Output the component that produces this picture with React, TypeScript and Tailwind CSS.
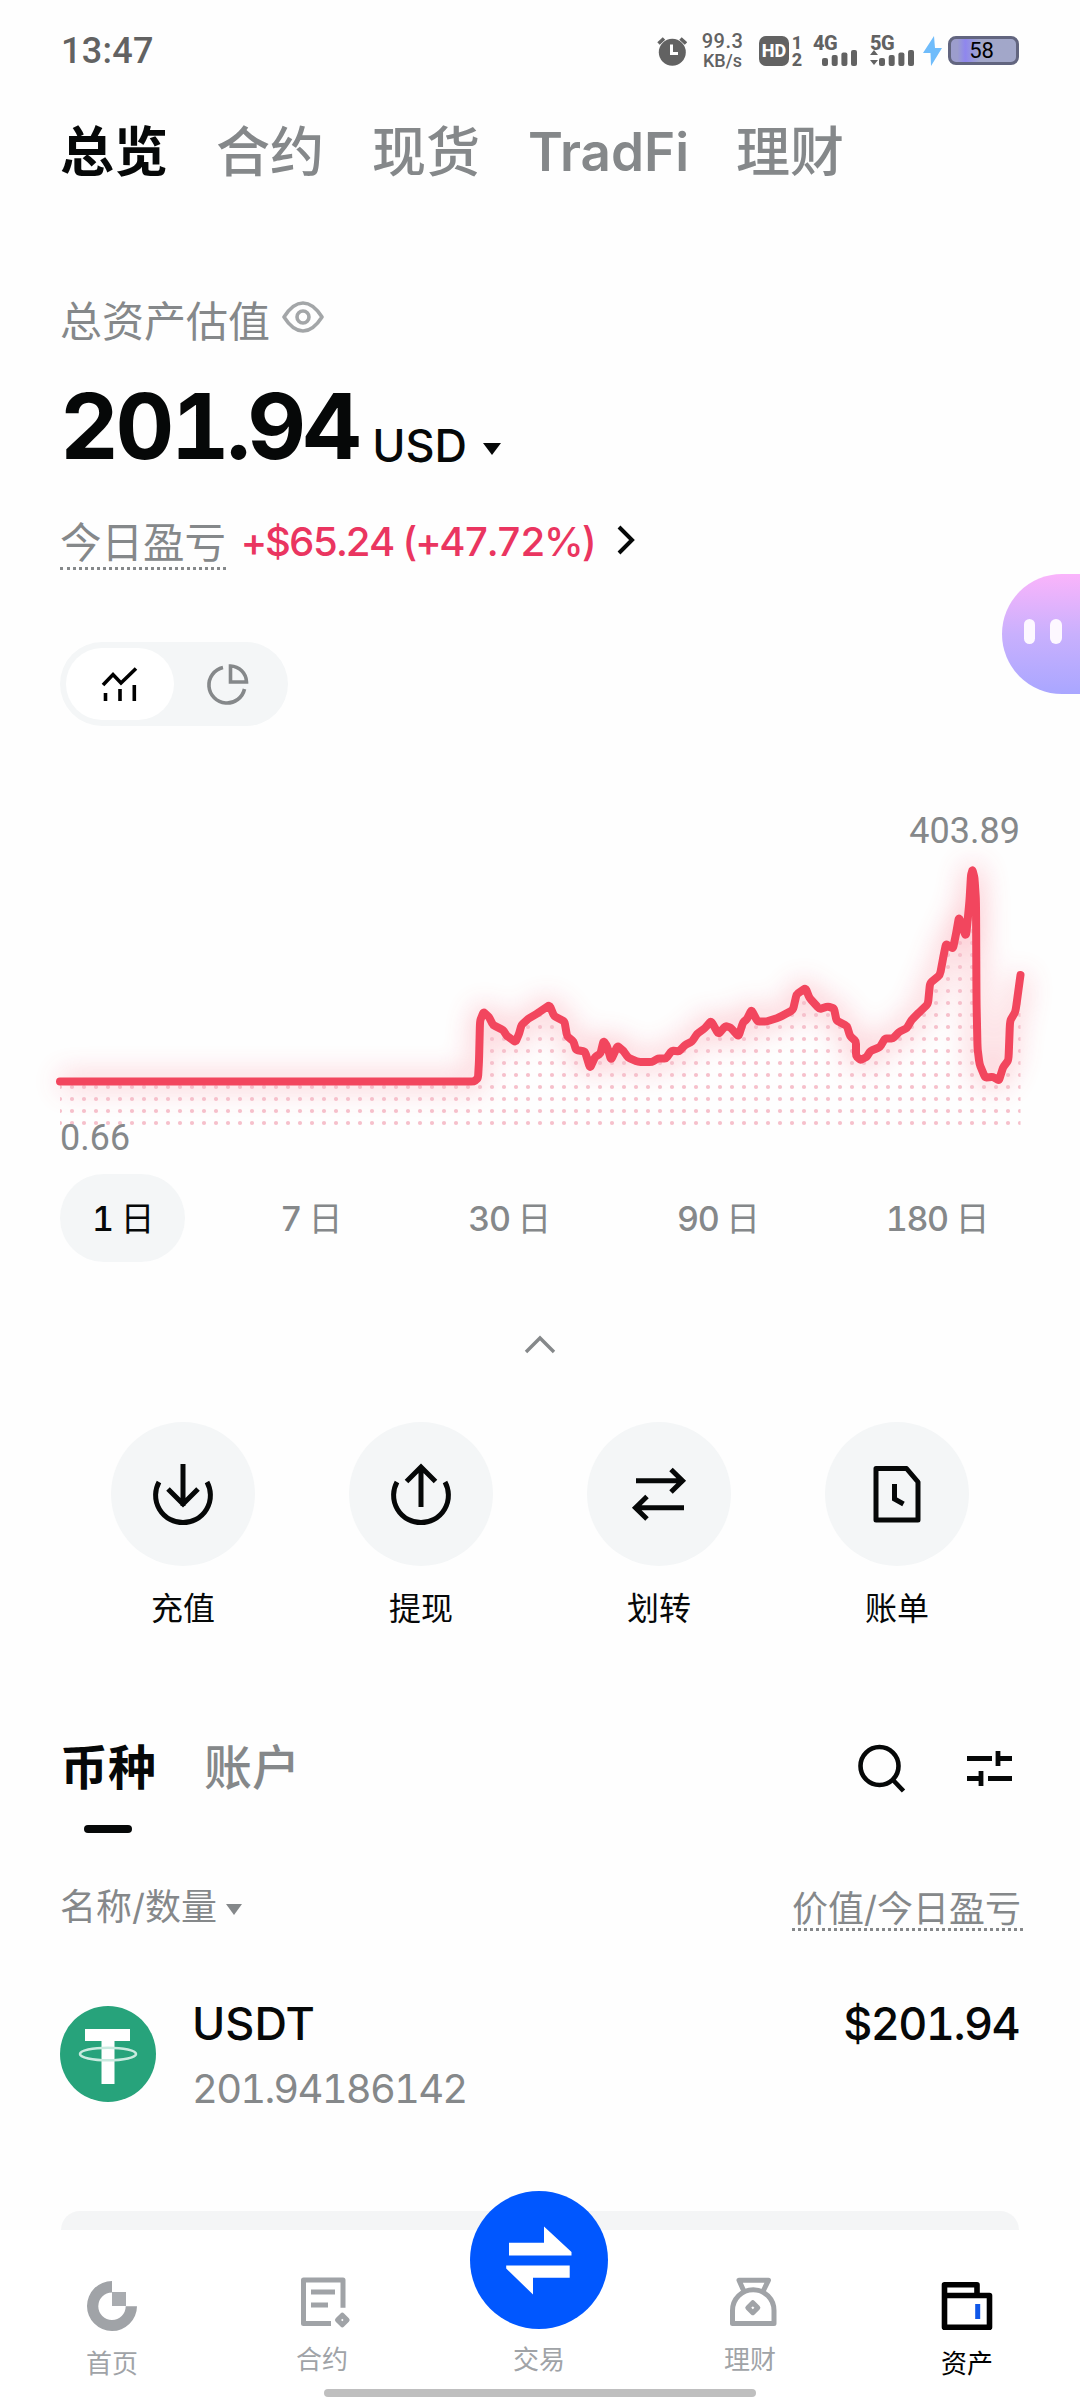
import type { ReactNode } from "react";

const topTabs = ["总览", "合约", "现货", "TradFi", "理财"];
const ranges = ["1", "7", "30", "90", "180"];

const linePoints: [number, number][] = [
  [60, 1080.5], [474, 1080.5], [478, 1077], [479, 1060], [480, 1020], [483.5, 1011], [489, 1016], [493, 1024],
  [503, 1029], [507, 1035], [515.5, 1041], [519, 1033], [521.5, 1024], [528, 1018], [538, 1012],
  [549.5, 1004], [554, 1015], [564.5, 1020.5], [567, 1035], [573.5, 1040.5], [576, 1049], [585, 1050.5],
  [590, 1067], [595, 1056], [600.5, 1052.5], [603.5, 1040], [607, 1045], [611, 1059], [617.5, 1045],
  [623.5, 1050], [628, 1056.5], [638, 1061], [652, 1061], [658, 1057.5], [666, 1057.5], [672, 1049.5],
  [679, 1050.5], [685, 1044], [692, 1040.5], [697, 1033], [705, 1027], [711, 1020], [718.5, 1033],
  [725.5, 1025], [730.5, 1026.5], [738.5, 1035.5], [743, 1021.5], [747, 1018], [751.5, 1009],
  [757.5, 1020.5], [766.5, 1020.5], [779, 1016.5], [793, 1009], [796.5, 993.5], [805.5, 987], [809.5, 997],
  [819.5, 1008], [828, 1005.5], [834, 1007.5], [836.5, 1019.5], [847, 1025], [850, 1035], [856, 1040.5],
  [856, 1055], [860.5, 1059], [866.5, 1056], [870.5, 1050], [880, 1046], [885, 1037.5], [893, 1037.5],
  [899, 1031], [907, 1027], [911.5, 1019], [919.5, 1011], [928, 1003], [930, 982], [940, 974],
  [943.5, 955], [946, 943], [953, 947.5], [956, 933], [959, 916], [966, 936], [969.5, 900], [971, 874], [972.5, 869],
  [974.5, 877], [976, 900], [976.5, 1000], [977.5, 1047], [979.5, 1063], [985, 1076.5], [993, 1076], [999, 1079.5],
  [1003, 1066.5], [1008.5, 1059], [1010, 1020], [1015.5, 1010.5], [1020.5, 974],
];

// straight segments with slightly rounded corners
function toPath(pts: [number, number][]) {
  let d = `M${pts[0][0]} ${pts[0][1]}`;
  for (let i = 1; i < pts.length; i++) {
    const [px, py] = pts[i - 1];
    const [x, y] = pts[i];
    const ax = px + (x - px) * 0.18;
    const ay = py + (y - py) * 0.18;
    const bx = px + (x - px) * 0.82;
    const by = py + (y - py) * 0.82;
    d += i === 1 ? ` L${x - 3} ${y}` : ` Q${px} ${py} ${ax} ${ay} L${bx} ${by}`;
  }
  const last = pts[pts.length - 1];
  return d + ` L${last[0]} ${last[1]}`;
}

const linePath = toPath(linePoints);

function SignalBars({ arrows }: { arrows?: boolean }) {
  return (
    <svg className="-mt-[1px] h-[17px] w-[45px]" viewBox="0 0 45 17" fill="#626262">
      {arrows && <path d="M0 6l4-5 4 5zM0 11h8l-4 5z" />}
      <rect x="9" y="9" width="6" height="8" rx="2" />
      <rect x="18.7" y="6" width="6" height="11" rx="2" />
      <rect x="28.4" y="3.5" width="6" height="13.5" rx="2" />
      <rect x="38" y="1" width="6" height="16" rx="2" />
    </svg>
  );
}

function StatusBar() {
  return (
    <div className="flex h-[102px] items-center justify-between pl-[61px] pr-[61px] text-[#626262]">
      <span className="font-[Roboto] text-[36px] leading-none font-medium tracking-[0.3px]">13:47</span>
      <div className="flex h-[34px] items-center font-[Roboto] font-semibold">
        <svg className="mr-[15px] h-[34px] w-[30px]" viewBox="657 34 30 34">
          <circle cx="672.3" cy="52.3" r="13.5" fill="#626262" />
          <path d="M658.5 43.5l5.5-5M686 43.5l-5.5-5" stroke="#626262" strokeWidth="3.6" />
          <path d="M671.5 44.5v9h6.5" fill="none" stroke="#fff" strokeWidth="3" />
        </svg>
        <div className="flex w-[41px] flex-col items-center leading-[20px] font-medium">
          <span className="text-[20px] tracking-[0.5px]">99.3</span>
          <span className="text-[18px]">KB/s</span>
        </div>
        <div className="ml-[16px] flex h-[30px] w-[30px] items-center justify-center rounded-[7px] bg-[#626262] text-[18px] font-extrabold text-white">
          HD
        </div>
        <div className="ml-[2px] flex w-[12px] flex-col items-center text-[18px] leading-[17px] font-extrabold">
          <span>1</span>
          <span>2</span>
        </div>
        <div className="ml-[10px] flex h-[30px] w-[45px] flex-col justify-between">
          <span className="text-[20px] leading-[14px] font-extrabold tracking-[-0.5px]">4G</span>
          <SignalBars />
        </div>
        <div className="ml-[12px] flex h-[30px] w-[45px] flex-col justify-between">
          <span className="text-[20px] leading-[14px] font-extrabold tracking-[-0.5px]">5G</span>
          <SignalBars arrows />
        </div>
        <svg className="ml-[8px] h-[30px] w-[19px]" viewBox="0 0 19 30">
          <path d="M11 0L0 17h7.500L8 30 19 12h-7z" fill="#6fbcfb" />
        </svg>
        <div className="ml-[6px] flex h-[29px] w-[71px] items-center justify-center rounded-[8px] border-[3px] border-[#62657f] bg-linear-to-r from-[#9c9dcd] from-10% via-[#8f86ee] via-22% to-[#a2a7c9] to-45% text-[22px] font-normal text-black">
          <span className="-ml-[4px]">58</span>
        </div>
      </div>
    </div>
  );
}

function ChartToggle() {
  return (
    <div className="mt-[72px] flex h-[84px] w-[228px] items-center rounded-full bg-[#f4f6f7] p-[6px]">
      <div className="flex h-[72px] w-[108px] items-center justify-center rounded-full bg-white">
        <svg className="h-[40px] w-[40px]" viewBox="100 663 40 40" fill="none" stroke="#000" strokeWidth="3.6">
          <path d="M103 684l10-10.500 8 8.500 15-14.500M105.500 692v8M120 688v12M134.300 684v16" />
        </svg>
      </div>
      <div className="flex h-[72px] w-[108px] items-center justify-center">
        <svg className="h-[44px] w-[44px]" viewBox="206 662 44 44" fill="none" stroke="#85888a" strokeWidth="3.6">
          <path d="M223 667.500a18 18 0 1 0 21.500 21.500" />
          <path d="M230.500 666v16h16a16.500 16.500 0 0 0-16-16z" />
        </svg>
      </div>
    </div>
  );
}

function AssetChart() {
  return (
    <div className="relative">
      <div className="mt-[85px] h-[40px] text-right font-[Roboto] text-[36px] leading-[40px] text-[#85888a]">403.89</div>
      <svg className="-mx-[60px] block h-[274px] w-[1080px] overflow-visible" viewBox="0 850 1080 274">
        <defs>
          <pattern id="dots" x="54" y="1080" width="12" height="12" patternUnits="userSpaceOnUse">
            <circle cx="6" cy="6" r="2.1" fill="#f6c0cb" />
          </pattern>
          <filter id="glow" x="-10%" y="-30%" width="120%" height="160%">
            <feGaussianBlur stdDeviation="14" />
          </filter>
        </defs>
        <path d={linePath} fill="none" stroke="#f9405a" strokeWidth="14" strokeLinejoin="round" opacity="0.3" filter="url(#glow)" />
        <path d={`${linePath} L1020.500 1125 L60 1125z`} fill="url(#dots)" />
        <path d={linePath} fill="none" stroke="#f2465e" strokeWidth="8" strokeLinecap="round" strokeLinejoin="round" />
      </svg>
      <div className="relative -mt-[7px] h-[40px] font-[Roboto] text-[36px] leading-[40px] text-[#85888a]">0.66</div>
    </div>
  );
}

function Action({ label, children }: { label: string; children: ReactNode }) {
  return (
    <div className="flex flex-col items-center">
      <div className="flex h-36 w-36 items-center justify-center rounded-full bg-[#f4f6f7]">
        <svg className="h-[72px] w-[72px]" viewBox="0 0 72 72" fill="none" stroke="#060808" strokeWidth="5">
          {children}
        </svg>
      </div>
      <span className="mt-[23px] text-[32px] leading-[40px] text-[#060808]">{label}</span>
    </div>
  );
}

function NavItem({ label, active, low, children }: { label: string; active?: boolean; low?: boolean; children?: ReactNode }) {
  return (
    <div className={`flex flex-col items-center ${low ? "pt-[46px]" : "pt-[42px]"} ${active ? "text-black" : "text-[#a0a3a7]"}`}>
      <svg className="h-[60px] w-[60px]" viewBox="0 0 60 60" fill="none" stroke="currentColor" strokeWidth="5">
        {children}
      </svg>
      <span className="mt-[12px] text-[26px] leading-[32px]">{label}</span>
    </div>
  );
}

export default function App() {
  return (
    <div className="relative flex h-[2400px] w-[1080px] flex-col overflow-hidden bg-[#fefefe] font-[Inter,'Noto_Sans_CJK_SC',sans-serif] tabular-nums">
      <StatusBar />

      <div className="flex h-24 items-center gap-[48px] px-[60px] pt-[6px] text-[54px] leading-none font-medium whitespace-nowrap text-[#85888a]">
        {topTabs.map((t, i) => (
          <span key={t} className={i === 0 ? "font-bold text-[#060808]" : t === "TradFi" ? "w-[160px] text-[53px] font-semibold" : ""}>
            {t}
          </span>
        ))}
      </div>

      <div className="flex flex-col px-[60px]">
        <div className="mt-[94px] flex h-[60px] items-center text-[42px] leading-[60px] text-[#85888a]">
          <span>总资产估值</span>
          <svg className="mt-[-9px] ml-[12px] h-[34px] w-[42px]" viewBox="0 0 42 34" fill="none" stroke="#a3a6a8" strokeWidth="3.6">
            <path d="M2 17C8 7.500 14 3 21 3S34 7.500 40 17C34 26.500 28 31 21 31S8 26.500 2 17z" strokeLinejoin="round" />
            <circle cx="21" cy="17" r="6" />
          </svg>
        </div>

        <div className="mt-[29px] flex h-[90px] items-center">
          <span className="text-[91px] leading-[90px] font-bold tracking-[-3.4px] text-[#060808]">201.94</span>
          <span className="mt-[41px] ml-[14px] text-[45px] leading-[90px] font-medium text-[#060808]">USD</span>
          <svg className="mt-[46px] ml-[16px] h-[12px] w-[18px]" viewBox="0 0 18 12">
            <path d="M0 0h18L9 12z" fill="#060808" />
          </svg>
        </div>

        <div className="mt-[44px] flex h-[55px] items-center">
          <span className="h-[55px] border-b-[3px] border-dotted border-[#85888a] text-[41.5px] leading-[57px] text-[#85888a]">今日盈亏</span>
          <span className="ml-[15px] text-[40px] leading-[52px] font-medium tracking-[-2px] whitespace-nowrap text-[#ea3560]">+$65.24 (+47.72%)</span>
          <svg className="mt-[-4px] ml-[21px] h-[32px] w-[20px]" viewBox="0 0 20 32" fill="none" stroke="#060808" strokeWidth="4">
            <path d="M3 3l13 13L3 29" />
          </svg>
        </div>

        <ChartToggle />
        <AssetChart />

        <div className="mt-[16px] flex h-[88px] justify-between text-[34px] leading-[90px] text-[#85888a]">
          {ranges.map((r, i) => (
            <span key={r} className={`rounded-full px-[32px] font-medium tracking-[-1.4px] ${i === 0 ? "bg-[#f4f6f7] text-[#060808]" : ""}`}>
              {r} <span className="font-normal">日</span>
            </span>
          ))}
        </div>

        <svg className="mt-[70px] h-[24px] w-[36px] self-center" viewBox="0 0 36 24" fill="none" stroke="#85888a" strokeWidth="3.4">
          <path d="M4 20L18 6l14 14" />
        </svg>
      </div>

      <div className="mt-[66px] grid grid-cols-4 px-[64px]">
        <Action label="充值">
          <path d="M12 24a27.400 27.400 0 1 0 48 0" />
          <path d="M36 6v42M21 31l15 15 15-15" />
        </Action>
        <Action label="提现">
          <path d="M12 24a27.400 27.400 0 1 0 48 0" />
          <path d="M36 49V8M21.500 23.500L36 9l14.500 14.500" />
        </Action>
        <Action label="划转">
          <path d="M13 22.700h46M48 11.500l11.500 11.200L48 34" />
          <path d="M61 49.700H13M24 38.500L12.500 49.700 24 61" />
        </Action>
        <Action label="账单">
          <path d="M15 10.500h30.500L57 24v38H15z" strokeLinejoin="round" />
          <path d="M33.500 26v15l9 5" />
        </Action>
      </div>

      <div className="mt-[109px] flex h-[60px] items-center px-[60px]">
        <div className="flex flex-1 gap-[48px] text-[48px] leading-[60px]">
          <span className="font-bold text-[#060808]">币种</span>
          <span className="font-medium text-[#85888a]">账户</span>
        </div>
        <svg className="h-[56px] w-[56px]" viewBox="851 1739 56 56" fill="none" stroke="#060808" strokeWidth="4.600">
          <circle cx="879.5" cy="1765" r="19" />
          <path d="M892.500 1778.500l11 11.500" />
        </svg>
        <svg className="ml-[53px] h-[56px] w-[60px]" viewBox="960 1740 60 56" fill="none" stroke="#060808" strokeWidth="4.800">
          <path d="M967 1758.500h25M998 1751v15M998 1758.500h14M967 1778.500h14M981 1771v15M988 1778.500h24" />
        </svg>
      </div>
      <div className="mt-[27px] ml-[84px] h-[9px] w-[48px] rounded-full bg-[#060808]" />

      <div className="mt-[48px] flex h-[50px] justify-between pr-[57px] pl-[60px] text-[36px] leading-[50px] text-[#85888a]">
        <div className="flex items-center">
          <span className="leading-[50px] pt-[2px]">名称/数量</span>
          <svg className="mt-[6px] ml-[9px] h-[11px] w-[16px]" viewBox="0 0 16 11">
            <path d="M0 0h16L8 11z" fill="#85888a" />
          </svg>
        </div>
        <span className="h-[50px] border-b-[3px] border-dotted border-[#85888a] pr-[2px] leading-[56px]">价值/今日盈亏</span>
      </div>

      <div className="mt-[75px] flex h-24 px-[60px]">
        <svg className="h-24 w-24" viewBox="0 0 96 96">
          <circle cx="48" cy="48" r="48" fill="#27a37b" />
          <path d="M25 23h45v12H54.500v43h-13V35H25z" fill="#fff" />
          <ellipse cx="48" cy="48" rx="28" ry="6.300" fill="none" stroke="#c9eadf" strokeWidth="2.600" />
        </svg>
        <div className="ml-[36px] flex flex-1 flex-col">
          <span className="mt-[-7px] text-[45px] leading-[50px] font-medium text-[#060808]">USDT</span>
          <span className="mt-[15px] text-[40px] leading-[50px] tracking-[-1.800px] text-[#85888a]">201.94186142</span>
        </div>
        <span className="mt-[-7px] mr-[1px] text-[45px] leading-[50px] font-medium tracking-[-1.600px] text-[#060808]">$201.94</span>
      </div>

      <div className="mx-[61px] mt-[109px] h-[19px] rounded-t-[24px] bg-[#f4f5f6]" />

      <div className="relative grid h-[170px] grid-cols-[210px_210px_224px_198px_236px] bg-white pl-[7px]">
        <NavItem label="首页" low>
          <g fill="currentColor" stroke="none">
            <path d="M30 5v11.500a13.700 13.700 0 1 0 13.700 13.700H55A25 25 0 1 1 30 5z" />
            <path d="M30 16h14v14H30z" opacity="0.9" />
          </g>
        </NavItem>
        <NavItem label="合约">
          <path d="M39 51.500H11.500V8H51V35.700" strokeLinejoin="round" />
          <path d="M19 20h24M19 33h17" />
          <path d="M50.300 43.200l4.800 4.800-4.800 4.800-4.800-4.800z" strokeLinejoin="round" />
        </NavItem>
        <NavItem label="交易" />
        <NavItem label="理财">
          <path d="M24 19.500L19 8.200h29.500L43 19.500M12.500 51.500V38.500a20.750 20.750 0 0 1 41.500 0v13z" strokeLinejoin="round" />
          <path d="M32.800 30.700l5 5-5 5-5-5z" strokeLinejoin="round" />
        </NavItem>
        <NavItem label="资产" active low>
          <path d="M7.500 19.500V8.800h32.500v10.700M7.500 19.500h45v31.700h-45z" strokeWidth="5.600" strokeLinejoin="round" />
          <path d="M40.700 28v15" stroke="#0f57e8" />
        </NavItem>
        <div className="absolute -top-[39px] left-[470px] flex h-[138px] w-[138px] items-center justify-center rounded-full bg-[#0057ff]">
          <svg className="h-[138px] w-[138px]" viewBox="470 2191 138 138" fill="#fff">
            <path d="M509 2242.700h35V2226.500L571.500 2252v3.500H509zM569.700 2265.500h-63.500v3L533 2294.500v-16.800h36.700z" />
          </svg>
        </div>
        <div className="absolute bottom-[3px] left-[324px] h-[8px] w-[432px] rounded-full bg-[#bfbfbf]" />
      </div>

      {/* assistant button docked to the right edge */}
      <div className="absolute top-[574px] right-0 flex h-[120px] w-[78px] gap-[15px] rounded-l-[60px] bg-linear-to-b from-[#fab4fb] via-[#c9b0fd] via-50% to-[#a9a6ff] pt-[45px] pl-[22px]">
        <div className="h-[25px] w-[11px] rounded-full bg-[#fdf8ff]" />
        <div className="h-[25px] w-[12px] rounded-full bg-[#fdf8ff]" />
      </div>
    </div>
  );
}
